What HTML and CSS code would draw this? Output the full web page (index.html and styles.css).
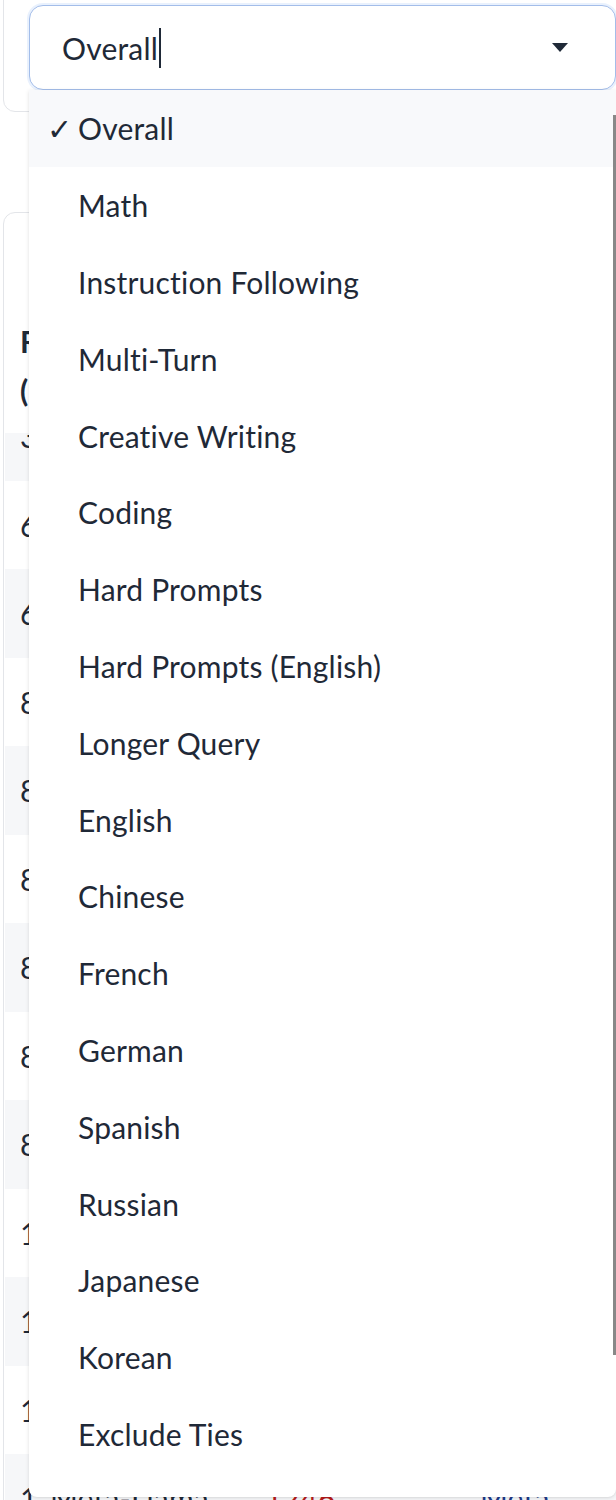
FILE: index.html
```html
<!DOCTYPE html>
<html lang="en">
<head>
  <meta charset="UTF-8">
  <meta name="viewport" content="width=device-width, initial-scale=1.0">
  <title>Leaderboard</title>
  <link rel="stylesheet" href="styles.css">
</head>
<body>
  <div class="page">
    <section class="block filter-block">
      <div class="dropdown">
        <div class="input-wrap">
          <span class="input-value">Overall</span><span class="caret"></span>
          <span class="arrow"></span>
        </div>
        <ul class="options">
          <li class="option selected"><span class="check">✓</span>Overall</li>
          <li class="option"><span class="check"></span>Math</li>
          <li class="option"><span class="check"></span>Instruction Following</li>
          <li class="option"><span class="check"></span>Multi-Turn</li>
          <li class="option"><span class="check"></span>Creative Writing</li>
          <li class="option"><span class="check"></span>Coding</li>
          <li class="option"><span class="check"></span>Hard Prompts</li>
          <li class="option"><span class="check"></span>Hard Prompts (English)</li>
          <li class="option"><span class="check"></span>Longer Query</li>
          <li class="option"><span class="check"></span>English</li>
          <li class="option"><span class="check"></span>Chinese</li>
          <li class="option"><span class="check"></span>French</li>
          <li class="option"><span class="check"></span>German</li>
          <li class="option"><span class="check"></span>Spanish</li>
          <li class="option"><span class="check"></span>Russian</li>
          <li class="option"><span class="check"></span>Japanese</li>
          <li class="option"><span class="check"></span>Korean</li>
          <li class="option"><span class="check"></span>Exclude Ties</li>
          <li class="option"><span class="check"></span>Exclude Short Query (&lt; 5 tokens)</li>
          <li class="option"><span class="check"></span>Exclude Refusal</li>
        </ul>
        <div class="scroll-thumb"></div>
      </div>
    </section>

    <section class="block table-block">
      <div class="table-head">
        <div class="th rank">Rank<br>(UB)</div>
        <div class="th model">Model</div>
        <div class="th score">Arena Score</div>
        <div class="th org">Organization</div>
      </div>
      <div class="table-body">
        <div class="rows">
          <div class="row"><span class="cell rank">3</span><span class="cell model">Gemini-1.5-Pro</span><span class="cell score">1301</span><span class="cell org">Google</span></div>
          <div class="row"><span class="cell rank">6</span><span class="cell model">ChatGPT-4o-latest</span><span class="cell score">1285</span><span class="cell org">OpenAI</span></div>
          <div class="row"><span class="cell rank">6</span><span class="cell model">GPT-4o-2024-05-13</span><span class="cell score">1284</span><span class="cell org">OpenAI</span></div>
          <div class="row"><span class="cell rank">8</span><span class="cell model">Claude 3.5 Sonnet</span><span class="cell score">1271</span><span class="cell org">Anthropic</span></div>
          <div class="row"><span class="cell rank">8</span><span class="cell model">Gemini-Advanced</span><span class="cell score">1267</span><span class="cell org">Google</span></div>
          <div class="row"><span class="cell rank">8</span><span class="cell model">Grok-2</span><span class="cell score">1266</span><span class="cell org">xAI</span></div>
          <div class="row"><span class="cell rank">8</span><span class="cell model">Llama-3.1-405b</span><span class="cell score">1264</span><span class="cell org">Meta</span></div>
          <div class="row"><span class="cell rank">8</span><span class="cell model">GPT-4o-mini</span><span class="cell score">1262</span><span class="cell org">OpenAI</span></div>
          <div class="row"><span class="cell rank">8</span><span class="cell model">Gemini-1.5-Flash</span><span class="cell score">1260</span><span class="cell org">Google</span></div>
          <div class="row"><span class="cell rank">10</span><span class="cell model">GPT-4-Turbo</span><span class="cell score">1257</span><span class="cell org">OpenAI</span></div>
          <div class="row"><span class="cell rank">12</span><span class="cell model">Mistral-Large-2407</span><span class="cell score">1251</span><span class="cell org">Mistral</span></div>
          <div class="row"><span class="cell rank">12</span><span class="cell model">Yi-Large-preview</span><span class="cell score">1249</span><span class="cell org">01 AI</span></div>
          <div class="row"><span class="cell rank">1</span><span class="cell model">Meta-Llama</span><span class="cell score new">1246</span><span class="cell org link">Meta</span></div>
        </div>
      </div>
    </section>
  </div>
</body>
</html>
```

FILE: styles.css
```css
* { box-sizing: border-box; }
html, body {
  margin: 0;
  padding: 0;
  height: 1500px;
  overflow: hidden;
}
body {
  font-family: "Source Sans Pro", Lato, "Noto Sans", sans-serif;
  font-size: 30px;
  letter-spacing: 0.2px;
  color: #1f2937;
  background: #ffffff;
}
.page {
  display: flex;
  flex-direction: column;
  gap: 100px;
  padding-left: 3px;
  margin-top: -20px;
}
.block {
  width: 640px;
  background: #ffffff;
  border: 1px solid #e3e5e9;
  border-radius: 12px;
}
.filter-block {
  padding: 24px 25px 21px 25px;
}

/* dropdown */
.dropdown {
  position: relative;
  width: 587px;
  z-index: 5;
}
.input-wrap {
  display: flex;
  align-items: center;
  height: 85px;
  padding-left: 32px;
  border: 1px solid #a3bde9;
  border-radius: 14px;
  box-shadow: 0 0 0 2px rgba(191, 214, 250, 0.35);
  background: #ffffff;
}
.input-value {
  line-height: 1;
}
.caret {
  display: inline-block;
  width: 2px;
  height: 40px;
  margin-left: 1px;
  background: #1f2937;
}
.arrow {
  margin-left: auto;
  margin-right: 47px;
  width: 0;
  height: 0;
  border-left: 8px solid transparent;
  border-right: 8px solid transparent;
  border-top: 9px solid #1f2937;
}
.options {
  position: absolute;
  top: 100%;
  left: 0;
  width: 100%;
  height: 1407px;
  margin: 0;
  padding: 0;
  list-style: none;
  background: #ffffff;
  border-radius: 0 0 8px 8px;
  box-shadow: 0 1px 4px 0 rgba(0, 0, 0, 0.12), 0 1px 2px -1px rgba(0, 0, 0, 0.1);
  overflow: hidden;
}
.scroll-thumb {
  position: absolute;
  top: 110px;
  right: 0;
  width: 3px;
  height: 1240px;
  background: #888888;
}
.option {
  display: flex;
  align-items: center;
  height: 76.8px;
  padding-left: 18px;
  white-space: nowrap;
}
.option.selected {
  background: #f8f9fb;
}
.check {
  display: inline-block;
  width: 31px;
}

/* table */
.table-block {
  padding: 0 0 0 1px;
}
.table-head {
  display: flex;
  padding: 104px 0 18px 0;
  font-weight: 700;
  line-height: 49px;
}
.th, .cell {
  padding-left: 15px;
}
.rank { width: 30px; flex-shrink: 0; }
.model { width: 215px; flex-shrink: 0; }
.score { width: 215px; flex-shrink: 0; }
.org { width: 170px; flex-shrink: 0; }
.th.rank { width: 80px; }
.th.model { width: 165px; }
.table-body {
  overflow: hidden;
}
.rows {
  margin-top: -41px;
}
.row {
  display: flex;
  align-items: center;
  height: 88.5px;
  white-space: nowrap;
}
.row:nth-child(odd) {
  background: #f6f7f9;
}
.score.new { color: #b91c1c; }
.org.link { color: #1e3a8a; }
```
